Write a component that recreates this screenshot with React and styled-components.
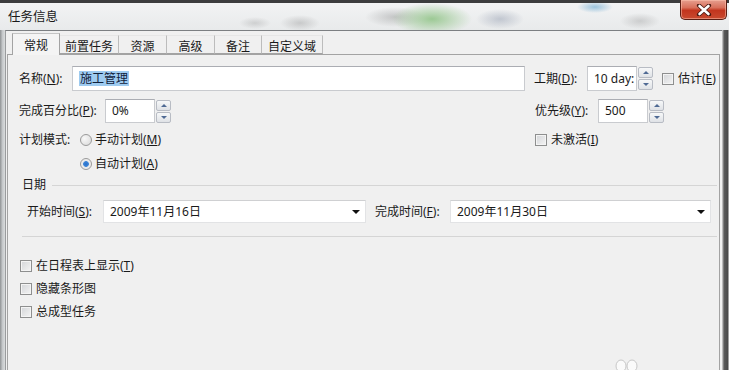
import styled, { createGlobalStyle } from 'styled-components';

const GlobalStyle = createGlobalStyle`
  html, body { margin: 0; padding: 0; background: #f0f0f0; }
  body {
    font-family: "Noto Sans", "Noto Sans CJK SC", sans-serif;
    font-size: 12px;
    line-height: 16px;
    color: #1a1a1a;
  }
`;

const Window = styled.div`
  width: 729px;
  height: 370px;
  overflow: hidden;
  display: flex;
  flex-direction: column;
  position: relative;
  background: #c8cbce;
`;

const TitleBar = styled.div`
  height: 30px;
  flex: none;
  display: flex;
  align-items: flex-start;
  justify-content: space-between;
  border-top: 3px solid #3c3d3e;
  box-sizing: border-box;
  background:
    radial-gradient(ellipse 40px 16px at 432px 16px, #9cc994 0%, rgba(156, 201, 148, 0) 100%),
    radial-gradient(ellipse 30px 10px at 395px 14px, rgba(120, 120, 120, 0.35) 0%, rgba(120, 120, 120, 0) 100%),
    radial-gradient(ellipse 24px 10px at 500px 16px, rgba(140, 150, 170, 0.45) 0%, rgba(140, 150, 170, 0) 100%),
    radial-gradient(ellipse 20px 8px at 300px 20px, rgba(120, 120, 120, 0.3) 0%, rgba(120, 120, 120, 0) 100%),
    radial-gradient(ellipse 16px 6px at 255px 20px, rgba(120, 120, 120, 0.25) 0%, rgba(120, 120, 120, 0) 100%),
    radial-gradient(ellipse 20px 8px at 640px 18px, rgba(130, 130, 130, 0.3) 0%, rgba(130, 130, 130, 0) 100%),
    radial-gradient(ellipse 18px 6px at 595px 4px, rgba(70, 150, 200, 0.5) 0%, rgba(70, 150, 200, 0) 100%),
    linear-gradient(#f2f3f4, #e8eaeb);
`;

const Title = styled.div`
  font-family: "Noto Sans CJK SC", sans-serif;
  font-size: 12.5px;
  line-height: 16px;
  padding: 5px 0 0 8px;
  color: #1a1a1a;
`;

const CloseButton = styled.div`
  width: 47px;
  height: 20px;
  margin: -3px 2px 0 0;
  box-sizing: border-box;
  border: 1px solid #5a1e14;
  border-top: none;
  border-radius: 0 0 5px 5px;
  background: linear-gradient(#e69f8f 0%, #d8705b 40%, #c2351e 55%, #c94a2f 100%);
  box-shadow: inset 0 0 0 1px rgba(255, 200, 180, 0.5);
  display: flex;
  align-items: center;
  justify-content: center;
`;

const Body = styled.div`
  flex: 1;
  display: flex;
  min-height: 0;
`;

const SideFrame = styled.div`
  width: ${({ $w }) => $w}px;
  flex: none;
  background: ${({ $dark }) =>
    $dark
      ? 'linear-gradient(90deg, #d8d8d8 0%, #5a5a5a 30%, #4a4a4a 80%, #d0d0d0 100%)'
      : 'linear-gradient(90deg, #8f9294 0%, #c5c8ca 50%, #dadcdd 100%)'};
`;

const Client = styled.div`
  flex: 1;
  background: #f0f0f0;
  border-top: 1px solid #7c7f82;
  border-left: 1px solid #9a9c9e;
  padding: 2px 0 0 1px;
  display: flex;
  flex-direction: column;
`;

const TabStrip = styled.div`
  display: flex;
  align-items: flex-end;
  padding-left: 5px;
  height: 21px;
  flex: none;
  position: relative;
  z-index: 1;
`;

const Tab = styled.div`
  font-family: "Noto Sans CJK SC", sans-serif;
  font-size: 12px;
  line-height: 16px;
  box-sizing: border-box;
  height: ${({ $active }) => ($active ? 22 : 19)}px;
  padding: ${({ $active }) => ($active ? '3px 11px 0 11px' : '2px 5px 0 5px')};
  margin-bottom: ${({ $active }) => ($active ? -1 : 0)}px;
  min-width: ${({ $w }) => $w}px;
  text-align: center;
  background: ${({ $active }) => ($active ? '#f4f4f4' : '#f0f0f0')};
  border: 1px solid ${({ $active }) => ($active ? '#a3a3a3' : '#bcbcbc')};
  border-bottom: ${({ $active }) => ($active ? 'none' : '1px solid #a3a3a3')};
  border-left: ${({ $first, $active }) => ($first || $active ? '1px solid #a3a3a3' : 'none')};
  border-top-color: ${({ $active }) => ($active ? '#c4c4c4' : '#e6e6e6')};
`;

const Panel = styled.div`
  flex: 1;
  border: 1px solid #a3a3a3;
  border-bottom: none;
  margin-right: 2px;
  background: #f0f0f0;
  padding: 11px 0 0 11px;
  display: flex;
  flex-direction: column;
`;

const Row = styled.div`
  display: flex;
  align-items: center;
  height: ${({ $h }) => $h}px;
  margin-top: ${({ $mt }) => $mt || 0}px;
  margin-left: ${({ $ml }) => $ml || 0}px;
`;

const Label = styled.span`
  font-size: 12px;
  line-height: 16px;
  white-space: nowrap;
  width: ${({ $w }) => ($w ? `${$w}px` : 'auto')};
  flex: none;
  margin-left: ${({ $ml }) => $ml || 0}px;
  u { text-decoration: underline; text-underline-offset: 1px; }
`;

const TextBox = styled.div`
  box-sizing: border-box;
  width: ${({ $w }) => $w}px;
  height: ${({ $h }) => $h || 24}px;
  flex: none;
  background: #fff;
  border: 1px solid #c9cbcf;
  border-top-color: #abadb3;
  display: flex;
  align-items: center;
  padding-left: 6px;
  overflow: hidden;
  white-space: nowrap;
  font-size: 12px;
  line-height: 16px;
`;

const Selected = styled.span`
  background: #9ecbf0;
  color: #10203a;
  padding: 0 1px;
  line-height: 15px;
`;

const Spin = styled.div`
  display: flex;
  flex-direction: column;
  justify-content: center;
  gap: 1px;
  width: 15px;
  flex: none;
  margin-left: 1px;
`;

const SpinBtn = styled.div`
  height: 11px;
  box-sizing: border-box;
  border: 1px solid #b8bcc4;
  border-radius: 2px;
  background: linear-gradient(#f7f8f9, #dfe2e6);
  display: flex;
  align-items: center;
  justify-content: center;
  &::after {
    content: '';
    border-left: 3px solid transparent;
    border-right: 3px solid transparent;
    ${({ $down }) => ($down ? 'border-top: 3px solid #4f6a94;' : 'border-bottom: 3px solid #4f6a94;')}
  }
`;

const Box = styled.span`
  width: 12px;
  height: 12px;
  box-sizing: border-box;
  flex: none;
  border: 1px solid #8e8f8f;
  background: linear-gradient(135deg, #d3d5d8, #f4f4f4);
  box-shadow: inset 0 0 0 1px #f4f4f4;
  margin-right: 4px;
`;

const Radio = styled.span`
  width: 12px;
  height: 12px;
  box-sizing: border-box;
  flex: none;
  border-radius: 50%;
  border: 1px solid #9a9a9a;
  background: ${({ $on }) =>
    $on
      ? 'radial-gradient(circle, #2a6fc9 0, #3d86d8 2.5px, #e8e8e8 3.2px, #f6f6f6 100%)'
      : 'radial-gradient(circle at 35% 35%, #f8f8f8, #d8d8d8)'};
  margin-right: 3px;
`;

const Option = styled.span`
  display: flex;
  align-items: center;
  height: 16px;
  line-height: 16px;
  white-space: nowrap;
  margin-left: ${({ $ml }) => $ml || 0}px;
`;

const GroupHead = styled.div`
  display: flex;
  align-items: center;
  gap: 6px;
  margin: 5px 2px 0 3px;
  height: 16px;
  &::after {
    content: '';
    flex: 1;
    height: 1px;
    background: #d5d5d5;
  }
`;

const Combo = styled.div`
  box-sizing: border-box;
  width: ${({ $w }) => $w}px;
  height: 23px;
  flex: none;
  background: #fff;
  border: 1px solid #e2e3e5;
  border-top-color: #cfd0d2;
  display: flex;
  align-items: center;
  justify-content: space-between;
  padding: 0 5px 0 6px;
  &::after {
    content: '';
    border-left: 4px solid transparent;
    border-right: 4px solid transparent;
    border-top: 4px solid #111;
  }
`;

const Separator = styled.div`
  height: 1px;
  background: #d5d5d5;
  margin: 13px 2px 0 3px;
`;

const CheckList = styled.div`
  display: flex;
  flex-direction: column;
  gap: 7px;
  margin: 21px 0 0 1px;
`;

const Watermark = styled.svg`
  position: absolute;
  left: 613px;
  top: 358px;
`;

function SpinBox({ w, value, h }) {
  return (
    <>
      <TextBox $w={w} $h={h}>{value}</TextBox>
      <Spin>
        <SpinBtn />
        <SpinBtn $down />
      </Spin>
    </>
  );
}

const tabs = [
  { t: '常规', w: 47 },
  { t: '前置任务', w: 58 },
  { t: '资源', w: 48 },
  { t: '高级', w: 48 },
  { t: '备注', w: 47 },
  { t: '自定义域', w: 61 },
];

export default function App() {
  return (
    <Window>
      <GlobalStyle />
      <TitleBar>
        <Title>任务信息</Title>
        <CloseButton>
          <svg width="16" height="12" viewBox="0 0 16 12">
            <path d="M3 1.5 L13 10.5 M13 1.5 L3 10.5"
              stroke="#4a1a12" strokeWidth="4.2" strokeLinecap="round" fill="none" />
            <path d="M3.5 2 L12.5 10 M12.5 2 L3.5 10"
              stroke="#fff" strokeWidth="2.6" strokeLinecap="round" fill="none" />
          </svg>
        </CloseButton>
      </TitleBar>
      <Body>
        <SideFrame $w={5} />
        <Client>
          <TabStrip>
            {tabs.map((tab, i) => (
              <Tab key={tab.t} $active={i === 0} $first={i === 0} $w={tab.w}>{tab.t}</Tab>
            ))}
          </TabStrip>
          <Panel>
            <Row $h={25}>
              <Label $w={53}>名称(<u>N</u>):</Label>
              <TextBox $w={453} $h={25}><Selected>施工管理</Selected></TextBox>
              <Label $w={53} $ml={9}>工期(<u>D</u>):</Label>
              <SpinBox w={50} h={25} value="10 day:" />
              <Option $ml={9}><Box />估计(<u>E</u>)</Option>
            </Row>
            <Row $h={24} $mt={8}>
              <Label $w={86}>完成百分比(<u>P</u>):</Label>
              <SpinBox w={50} value="0%" />
              <Label $w={63} $ml={364}>优先级(<u>Y</u>):</Label>
              <SpinBox w={50} value="500" />
            </Row>
            <Row $h={16} $mt={9}>
              <Label $w={61}>计划模式:</Label>
              <Option><Radio />手动计划(<u>M</u>)</Option>
              <Option $ml={374}><Box />未激活(<u>I</u>)</Option>
            </Row>
            <Row $h={16} $mt={8} $ml={61}>
              <Option><Radio $on />自动计划(<u>A</u>)</Option>
            </Row>
            <GroupHead>日期</GroupHead>
            <Row $h={23} $mt={7} $ml={8}>
              <Label $w={76}>开始时间(<u>S</u>):</Label>
              <Combo $w={263}>2009年11月16日</Combo>
              <Label $w={75} $ml={9}>完成时间(<u>F</u>):</Label>
              <Combo $w={261}>2009年11月30日</Combo>
            </Row>
            <Separator />
            <CheckList>
              <Option><Box />在日程表上显示(<u>T</u>)</Option>
              <Option><Box />隐藏条形图</Option>
              <Option><Box />总成型任务</Option>
            </CheckList>
          </Panel>
        </Client>
        <SideFrame $w={7} $dark />
      </Body>
      <Watermark width="30" height="14" viewBox="0 0 30 14">
        <ellipse cx="8" cy="8" rx="5" ry="6" fill="#fafafa" stroke="#c8c8c8" />
        <ellipse cx="19" cy="8" rx="5" ry="6" fill="#fafafa" stroke="#c8c8c8" />
      </Watermark>
    </Window>
  );
}
